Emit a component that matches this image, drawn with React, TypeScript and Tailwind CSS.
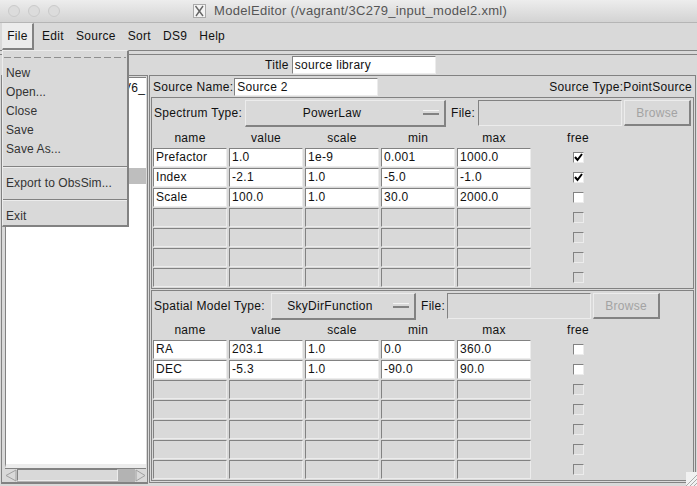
const sunken = 'border-t border-l border-t-[#828282] border-l-[#828282] border-b border-r border-b-[#ececec] border-r-[#ececec]';
const raised = 'border-t border-l border-t-[#ececec] border-l-[#ececec] border-b-2 border-r-2 border-b-[#828282] border-r-[#828282]';

type Row = [string, string, string, string, string, boolean?];

const spectrumRows: Row[] = [
  ['Prefactor', '1.0', '1e-9', '0.001', '1000.0', true],
  ['Index', '-2.1', '1.0', '-5.0', '-1.0', true],
  ['Scale', '100.0', '1.0', '30.0', '2000.0', false],
];

const spatialRows: Row[] = [
  ['RA', '203.1', '1.0', '0.0', '360.0', false],
  ['DEC', '-5.3', '1.0', '-90.0', '90.0', false],
];

function Cell({ text, enabled }: { text?: string; enabled: boolean }) {
  return (
    <div className={`w-[74px] h-[19px] pl-[2px] leading-[17px] overflow-hidden whitespace-nowrap ${sunken} ${enabled ? 'bg-white' : ''}`}>
      {text}
    </div>
  );
}

function FreeBox({ enabled, checked }: { enabled: boolean; checked?: boolean }) {
  return (
    <div className="w-[43px] flex justify-center">
      <div className={`w-[11px] h-[11px] ${sunken} ${enabled ? 'bg-white' : ''}`}>
        {checked ? (
          <svg width="9" height="9" viewBox="0 0 9 9">
            <path d="M1 4 L3.5 7 L8 1" fill="none" stroke="#000" strokeWidth="2" />
          </svg>
        ) : null}
      </div>
    </div>
  );
}

function ParamTable({ rows }: { rows: Row[] }) {
  const blanks = Array.from({ length: 7 - rows.length }, (_, i) => i);
  return (
    <div>
      <div className="flex h-[20px] gap-[2px] items-center text-center">
        {['name', 'value', 'scale', 'min', 'max'].map((h) => (
          <div key={h} className="w-[74px]">{h}</div>
        ))}
        <div className="w-[90px]">free</div>
      </div>
      {rows.map((r) => (
        <div key={r[0]} className="flex h-[20px] gap-[2px]">
          {r.slice(0, 5).map((t, i) => (
            <Cell key={i} text={t as string} enabled />
          ))}
          <div className="w-[90px] flex justify-center pt-[4px]">
            <FreeBox enabled checked={r[5]} />
          </div>
        </div>
      ))}
      {blanks.map((b) => (
        <div key={b} className="flex h-[20px] gap-[2px]">
          {[0, 1, 2, 3, 4].map((i) => (
            <Cell key={i} enabled={false} />
          ))}
          <div className="w-[90px] flex justify-center pt-[4px]">
            <FreeBox enabled={false} />
          </div>
        </div>
      ))}
    </div>
  );
}

function OptionMenu({ label, width, textWidth }: { label: string; width: string; textWidth: string }) {
  return (
    <div className={`h-[27px] shrink-0 flex items-center ${width} ${raised}`}>
      <div className={`text-center ${textWidth}`}>{label}</div>
      <div className="w-[16px] h-[5px] ml-auto mr-[5px] bg-[#d9d9d9] border-t border-t-[#f4f4f4] border-b-2 border-b-[#828282]" />
    </div>
  );
}

function MenuDropdown() {
  const first = ['New', 'Open...', 'Close', 'Save', 'Save As...'];
  return (
    <div className="absolute left-[2px] top-[50px] w-[127px] h-[177px] bg-[#d9d9d9] border border-[#ececec] border-r-2 border-b-2 border-r-[#828282] border-b-[#828282] tracking-[0.1px] text-[#333] z-10">
      <div className="mt-[6px] mx-[1px] h-px bg-[repeating-linear-gradient(90deg,#8f8f8f_0_7px,transparent_7px_10px)]" />
      <div className="mt-[6px] pl-[3px]">
        {first.map((t) => (
          <div key={t} className="h-[19px] leading-[19px]">{t}</div>
        ))}
      </div>
      <div className="mt-[7px] border-t border-b border-t-[#828282] border-b-[#ececec] h-[2px]" />
      <div className="h-[31px] pl-[3px] leading-[31px]">Export to ObsSim...</div>
      <div className="border-t border-b border-t-[#828282] border-b-[#ececec] h-[2px]" />
      <div className="h-[30px] pl-[3px] leading-[30px]">Exit</div>
    </div>
  );
}

function FileEntry({ width }: { width: string }) {
  return <div className={`h-[26px] shrink-0 ${width} ${sunken}`} />;
}

function Browse() {
  return (
    <div className={`w-[67px] h-[26px] flex items-center justify-center text-[#a3a3a3] ${raised} border-b border-r`}>
      Browse
    </div>
  );
}

export default function App() {
  return (
    <div
      className="relative w-[697px] h-[486px] overflow-hidden bg-[#d9d9d9] text-[12px] tracking-[0.3px] text-[#111] flex flex-col"
      style={{ fontFamily: '"Liberation Sans", Arial, sans-serif' }}
    >
      {/* window chrome */}
      <div className="h-[23px] shrink-0 flex items-center bg-gradient-to-b from-[#ededed] to-[#d3d3d3] border-b border-b-[#b5b5b5]">
        <div className="flex gap-[8px] pl-[8px]">
          <span className="w-[12px] h-[12px] rounded-full bg-[#dcdcdc] border border-[#cacaca]" />
          <span className="w-[12px] h-[12px] rounded-full bg-[#dcdcdc] border border-[#cacaca]" />
          <span className="w-[12px] h-[12px] rounded-full bg-[#dcdcdc] border border-[#cacaca]" />
        </div>
        <svg className="ml-[133px]" width="13" height="14" viewBox="0 0 13 14">
          <rect x="0.5" y="0.5" width="12" height="13" fill="#f4f4f4" stroke="#aaa" />
          <path d="M2.5 2 L10 12 M10 2 L3 12" stroke="#666" strokeWidth="1.4" />
        </svg>
        <span className="ml-[8px] text-[13px] tracking-[0.3px] text-[#555] whitespace-nowrap">
          ModelEditor (/vagrant/3C279_input_model2.xml)
        </span>
      </div>

      {/* menu bar */}
      <div className="h-[27px] shrink-0 flex items-center pl-[2px]">
        <div className={`w-[32px] h-[27px] flex items-center justify-center bg-[#ececec] ${raised} border-b border-r`}>File</div>
        <div className="ml-[8px] mb-px flex gap-[12px]">
          <span>Edit</span>
          <span>Source</span>
          <span>Sort</span>
          <span>DS9</span>
          <span>Help</span>
        </div>
      </div>
      <div className="h-[5px] shrink-0 border-t border-b border-t-[#828282] border-b-[#828282]" />

      {/* title row */}
      <div className="h-[20px] shrink-0 flex items-center pl-[265px] gap-[3px]">
        <span>Title</span>
        <div className={`w-[144px] h-[18px] pl-[2px] leading-[16px] bg-white ${sunken}`}>source library</div>
      </div>

      <div className="flex-1 min-h-0 flex pb-[1px] pl-[1px] pr-[1px]">
        {/* source list */}
        <div className="w-[147px] shrink-0 mb-[1px] flex flex-col border border-[#828282] border-b-2 pl-[3px] pr-[1px] pt-[1px]">
          <div className="flex-1 min-h-0 bg-white border-l border-t border-[#828282] border-b-4 border-b-[#ececec] pt-[1px] overflow-hidden">
            <div className="h-[15px] pl-[117px] whitespace-nowrap">V6_</div>
            <div className="h-[16px] mt-[74px] bg-[#bebebe]" />
          </div>
          <div className="h-[14px] shrink-0 flex border-t border-t-[#828282] bg-[#b3b3b3]">
            <svg width="12" height="13" viewBox="0 0 12 13" className="bg-[#d9d9d9]">
              <path d="M11 1 L1 6.5 L11 12 Z" fill="#d9d9d9" stroke="#a0a0a0" />
            </svg>
            <div className={`w-[101px] h-[12px] bg-[#d9d9d9] ${sunken}`} />
            <div className="flex-1" />
            <svg width="11" height="13" viewBox="0 0 11 13" className="bg-[#d9d9d9]">
              <path d="M1 1 L10 6.5 L1 12 Z" fill="#d9d9d9" stroke="#a0a0a0" />
            </svg>
          </div>
        </div>

        {/* source detail */}
        <div className="flex-1 min-w-0 ml-[1px] mb-[2px] flex flex-col border border-[#828282]">
          <div className="h-[21px] shrink-0 flex items-center pl-[3px] pr-[3px] gap-[1px]">
            <span>Source Name:</span>
            <div className={`w-[144px] h-[18px] pl-[2px] leading-[16px] bg-white ${sunken}`}>Source 2</div>
            <span className="ml-auto">Source Type:PointSource</span>
          </div>

          <div className="shrink-0 mx-[1px] border border-[#828282] pl-[1px] h-[192px]">
            <div className="h-[30px] flex items-center">
              <span className="w-[92px] pl-px whitespace-nowrap">Spectrum Type:</span>
              <OptionMenu label="PowerLaw" width="w-[201px]" textWidth="w-[172px]" />
              <span className="ml-[5px] whitespace-nowrap">File:</span>
              <div className="ml-[3px]"><FileEntry width="w-[144px]" /></div>
              <div className="ml-[2px]"><Browse /></div>
            </div>
            <ParamTable rows={spectrumRows} />
          </div>

          <div className="flex-1 min-h-0 mx-[1px] mt-[1px] mb-[1px] border border-[#828282] pl-[1px]">
            <div className="h-[29px] pt-px flex items-center">
              <span className="w-[118px] pl-px whitespace-nowrap">Spatial Model Type:</span>
              <OptionMenu label="SkyDirFunction" width="w-[145px]" textWidth="w-[116px]" />
              <span className="ml-[5px] whitespace-nowrap">File:</span>
              <div className="ml-[2px]"><FileEntry width="w-[144px]" /></div>
              <div className="ml-[2px]"><Browse /></div>
            </div>
            <ParamTable rows={spatialRows} />
          </div>
        </div>
      </div>

      <MenuDropdown />

      {/* resize grip */}
      <svg className="absolute right-0 bottom-0 bg-[#f1f1f1]" width="11" height="14" viewBox="0 0 11 14">
        <path d="M0 14 L11 3 M4 14 L11 7 M8 14 L11 11" stroke="#aaa" />
      </svg>
    </div>
  );
}
